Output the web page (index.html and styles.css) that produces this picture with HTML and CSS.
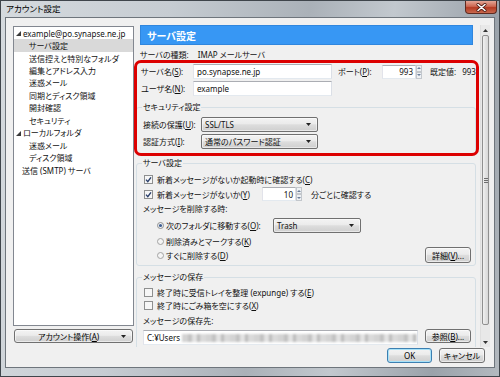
FILE: index.html
```html
<!DOCTYPE html>
<html lang="ja">
<head>
<meta charset="utf-8">
<title>アカウント設定</title>
<link rel="stylesheet" href="styles.css">
</head>
<body>
<div class="window">
  <div class="titlebar">
    <span class="title">アカウント設定</span>
    <span class="close"><svg width="11" height="9" viewBox="0 0 11 9"><path d="M2 1.5L9 7.5M9 1.5L2 7.5" stroke="#4a1b12" stroke-width="3" stroke-linecap="round"/><path d="M2 1.5L9 7.5M9 1.5L2 7.5" stroke="#fff" stroke-width="1.6" stroke-linecap="round"/></svg></span>
  </div>
  <div class="client">
    <div class="main">
      <div class="leftcol">
        <ul class="tree">
          <li class="root"><svg class="twisty" width="5" height="5" viewBox="0 0 5 5"><path d="M5 0V5H0Z" fill="#3a3a3a"/></svg>example@po.synapse.ne.jp</li>
          <li class="sub selected">サーバ設定</li>
          <li class="sub">送信控えと特別なフォルダ</li>
          <li class="sub">編集とアドレス入力</li>
          <li class="sub">迷惑メール</li>
          <li class="sub">同期とディスク領域</li>
          <li class="sub">開封確認</li>
          <li class="sub">セキュリティ</li>
          <li class="root"><svg class="twisty" width="5" height="5" viewBox="0 0 5 5"><path d="M5 0V5H0Z" fill="#3a3a3a"/></svg>ローカルフォルダ</li>
          <li class="sub">迷惑メール</li>
          <li class="sub">ディスク領域</li>
          <li class="leaf">送信 (SMTP) サーバ</li>
        </ul>
        <div class="btn acct-btn"><span>アカウント操作(<u>A</u>)</span><svg width="5" height="3" viewBox="0 0 5 3"><path d="M0 0H5L2.5 3Z" fill="#222"/></svg></div>
      </div>
      <div class="rightcol">
        <div class="pane">
          <div class="content">
            <div class="banner">サーバ設定</div>
            <div class="type">サーバの種類:<span class="gap">IMAP メールサーバ</span></div>
            <div class="srow first">
              <span class="lbl-srv">サーバ名(<u>S</u>):</span>
              <span class="tb tb-wide">po.synapse.ne.jp</span>
              <span class="port-lbl">ポート(<u>P</u>):</span>
              <span class="spin spin-port"><span class="tb tb-num">993</span><span class="spin-btns"><span class="sbtn"><svg width="4" height="2" viewBox="0 0 4 2"><path d="M0 2H4L2 0Z" fill="#6b7f99"/></svg></span><span class="sbtn"><svg width="4" height="2" viewBox="0 0 4 2"><path d="M0 0H4L2 2Z" fill="#6b7f99"/></svg></span></span></span>
              <span class="defval">既定値:<span class="gap2">993</span></span>
            </div>
            <div class="srow">
              <span class="lbl-srv">ユーザ名(<u>N</u>):</span>
              <span class="tb tb-wide">example</span>
            </div>
            <fieldset class="group sec">
              <legend>セキュリティ設定</legend>
              <div class="grow">
                <span class="lbl-sec">接続の保護(<u>U</u>):</span>
                <span class="combo combo-sec"><span>SSL/TLS</span><svg width="5" height="3" viewBox="0 0 5 3"><path d="M0 0H5L2.5 3Z" fill="#222"/></svg></span>
              </div>
              <div class="grow second">
                <span class="lbl-sec">認証方式(<u>I</u>):</span>
                <span class="combo combo-sec"><span>通常のパスワード認証</span><svg width="5" height="3" viewBox="0 0 5 3"><path d="M0 0H5L2.5 3Z" fill="#222"/></svg></span>
              </div>
            </fieldset>
            <fieldset class="group srv">
              <legend>サーバ設定</legend>
              <div class="cbrow">
                <svg class="cb" width="9" height="9" viewBox="0 0 9 9"><rect x="0.5" y="0.5" width="8" height="8" fill="#f6f6f6" stroke="#8e8f8f"/><path d="M2 4.6L3.8 6.6L7 2.3" fill="none" stroke="#2a3f6b" stroke-width="1.4"/></svg>
                <span>新着メッセージがないか起動時に確認する(<u>C</u>)</span>
              </div>
              <div class="cbrow cb2">
                <svg class="cb" width="9" height="9" viewBox="0 0 9 9"><rect x="0.5" y="0.5" width="8" height="8" fill="#f6f6f6" stroke="#8e8f8f"/><path d="M2 4.6L3.8 6.6L7 2.3" fill="none" stroke="#2a3f6b" stroke-width="1.4"/></svg>
                <span class="cb2-lbl">新着メッセージがないか(<u>Y</u>)</span>
                <span class="spin spin-min"><span class="tb tb-num">10</span><span class="spin-btns"><span class="sbtn"><svg width="4" height="2" viewBox="0 0 4 2"><path d="M0 2H4L2 0Z" fill="#6b7f99"/></svg></span><span class="sbtn"><svg width="4" height="2" viewBox="0 0 4 2"><path d="M0 0H4L2 2Z" fill="#6b7f99"/></svg></span></span></span>
                <span class="minutes">分ごとに確認する</span>
              </div>
              <div class="plain del">メッセージを削除する時:</div>
              <div class="rrow r1">
                <svg class="radio" width="7" height="7" viewBox="0 0 7 7"><circle cx="3.5" cy="3.5" r="3" fill="#f4f4f4" stroke="#8e8f8f"/><circle cx="3.5" cy="3.5" r="1.6" fill="#3d5e92"/></svg>
                <span class="r1-lbl">次のフォルダに移動する(<u>O</u>):</span>
                <span class="combo combo-trash"><span>Trash</span><svg width="5" height="3" viewBox="0 0 5 3"><path d="M0 0H5L2.5 3Z" fill="#222"/></svg></span>
              </div>
              <div class="rrow r2">
                <svg class="radio" width="7" height="7" viewBox="0 0 7 7"><circle cx="3.5" cy="3.5" r="3" fill="#f4f4f4" stroke="#a3a3a3"/></svg>
                <span>削除済みとマークする(<u>K</u>)</span>
              </div>
              <div class="rrow r3">
                <span class="rgroup">
                  <svg class="radio" width="7" height="7" viewBox="0 0 7 7"><circle cx="3.5" cy="3.5" r="3" fill="#f4f4f4" stroke="#a3a3a3"/></svg>
                  <span>すぐに削除する(<u>D</u>)</span>
                </span>
                <span class="btn small-btn">詳細(<u>V</u>)...</span>
              </div>
            </fieldset>
            <fieldset class="group store">
              <legend>メッセージの保存</legend>
              <div class="cbrow">
                <svg class="cb" width="9" height="9" viewBox="0 0 9 9"><rect x="0.5" y="0.5" width="8" height="8" fill="#f6f6f6" stroke="#8e8f8f"/></svg>
                <span>終了時に受信トレイを整理 (expunge) する(<u>E</u>)</span>
              </div>
              <div class="cbrow cb-next">
                <svg class="cb" width="9" height="9" viewBox="0 0 9 9"><rect x="0.5" y="0.5" width="8" height="8" fill="#f6f6f6" stroke="#8e8f8f"/></svg>
                <span>終了時にごみ箱を空にする(<u>X</u>)</span>
              </div>
              <div class="plain dest">メッセージの保存先:</div>
              <div class="pathrow">
                <span class="tb tb-path">C:¥Users<span class="blur"></span></span>
                <span class="btn small-btn">参照(<u>B</u>)...</span>
              </div>
            </fieldset>
          </div>
          <div class="scrollbar">
            <span class="sb-arrow"><svg width="5" height="3" viewBox="0 0 5 3"><path d="M0 3H5L2.5 0Z" fill="#333"/></svg></span>
            <span class="sb-track"><span class="sb-thumb"><span class="grip"></span></span></span>
            <span class="sb-arrow"><svg width="5" height="3" viewBox="0 0 5 3"><path d="M0 0H5L2.5 3Z" fill="#333"/></svg></span>
          </div>
        </div>
        <div class="dlg">
          <span class="btn dlg-btn ok">OK</span>
          <span class="btn dlg-btn cancel">キャンセル</span>
        </div>
      </div>
    </div>
    <div class="highlight"></div>
  </div>
</div>
</body>
</html>
```
FILE: styles.css
```css
* { box-sizing: border-box; }
html, body { margin: 0; padding: 0; }
body {
  width: 500px; height: 377px; overflow: hidden;
  font-family: "Noto Sans", "Noto Sans CJK JP", sans-serif;
  font-size: 8px; color: #111;
  font-feature-settings: "palt";
  background: #fff;
}
u { text-decoration: underline; text-underline-offset: 1px; }

.window {
  width: 500px; height: 377px;
  border: 1px solid #3f454b;
  background: linear-gradient(100deg, #d5dade 0%, #c6ccd2 30%, #aab1b8 55%, #c2c8ce 70%, #9aa2aa 88%, #b3b9bf 100%);
  display: flex; flex-direction: column;
}
.titlebar {
  height: 16px; flex: none;
  display: flex; justify-content: space-between; align-items: flex-start;
  padding-left: 5px;
}
.title { line-height: 16px; color: #000; font-size: 8.5px; }
.close {
  width: 32px; height: 13px; margin-right: 2px;
  background: linear-gradient(#e4a696, #cc6650 45%, #b43a22 55%, #c8694e);
  border: 1px solid #5e2a20; border-top: none;
  border-radius: 0 0 4px 4px;
  display: flex; align-items: center; justify-content: center;
}

.client {
  flex: 1;
  margin: 0 4px 8px;
  border: 1px solid #6e757c;
  background: #f0f0f0;
  padding: 7px 4px 4px 7px;
  position: relative;
}
.main {
  display: grid;
  grid-template-columns: 121px 1fr;
  column-gap: 1px;
  height: 338px;
}

/* left column */
.leftcol { display: flex; flex-direction: column; padding-top: 1px; }
.tree {
  height: 300px; margin: 0; padding: 0; list-style: none;
  background: #fff; border: 1px solid #828790;
}
.tree li {
  height: 12.45px; display: flex; align-items: center; white-space: nowrap;
}
.tree .root { padding-left: 2px; }
.tree .twisty { margin-right: 2px; margin-top: 1px; }
.tree .sub { padding-left: 15px; }
.tree .leaf { padding-left: 8px; }
.tree .selected { background: #d9d9d9; }

.btn {
  height: 14px;
  border: 1px solid #707070; border-radius: 3px;
  background: linear-gradient(#f3f3f3 0%, #ebebeb 45%, #dddddd 52%, #cfcfcf 100%);
  box-shadow: inset 0 0 0 1px rgba(255,255,255,0.55);
  display: flex; align-items: center; justify-content: center;
  color: #000; white-space: nowrap;
}
.acct-btn {
  margin-top: 3px; margin-left: 1px; width: 119px;
  justify-content: space-between;
  padding: 0 6px 0 23px;
}

/* right column */
.rightcol { display: flex; flex-direction: column; }
.pane { height: 322px; display: flex; overflow: hidden; }
.content {
  flex: 1; min-width: 0; overflow: hidden;
  padding: 0 4px 0 1px;
}
.banner {
  height: 20px; margin: 0 3px 0 4px;
  background: #3797f4;
  border: 1px solid #2f86de;
  color: #fff; font-weight: bold; font-size: 10px;
  display: flex; align-items: center; padding-left: 6px;
}
.type {
  height: 10px; line-height: 10px; margin-top: 5px; padding-left: 4px;
  white-space: nowrap;
}
.gap { margin-left: 9px; }
.gap2 { margin-left: 6px; }

.srow {
  display: flex; align-items: center; height: 15px;
  padding-left: 5px; margin-top: 2px; white-space: nowrap;
}
.srow.first { margin-top: 4px; }
.lbl-srv { width: 52px; }
.tb {
  height: 15px;
  border: 1px solid #abadb3;
  border-color: #abadb3 #dbdfe6 #e3e9ef #e2e3ea;
  background: #fff;
  padding-left: 3px;
  display: flex; align-items: center;
  white-space: nowrap; overflow: hidden;
}
.tb-wide { width: 139px; }
.port-lbl { margin-left: 6px; width: 44px; }
.spin { display: flex; height: 14px; }
.spin .tb { height: 14px; }
.spin-port { width: 40px; }
.spin-min { width: 40px; }
.tb-num { flex: 1; justify-content: flex-end; padding-right: 2px; }
.spin-btns { width: 6px; display: flex; flex-direction: column; }
.sbtn {
  flex: 1; border: 1px solid #c3c7cc; background: #eef1f4;
  display: flex; align-items: center; justify-content: center;
}
.defval { margin-left: 8px; }

/* groupboxes */
.group {
  margin: 0;
  border: 1px solid #d5dfe5; border-radius: 3px;
  padding: 5px 4px 6px 5px;
}
.group legend {
  padding: 0 1px; height: 10px; line-height: 10px;
}
.sec { margin-top: 6px; }
.grow { display: flex; align-items: center; height: 15px; white-space: nowrap; }
.grow.second { margin-top: 2px; }
.lbl-sec { width: 59px; padding-left: 1px; }
.combo {
  height: 15px;
  border: 1px solid #707070; border-radius: 2px;
  background: linear-gradient(#f3f3f3 0%, #ebebeb 45%, #dddddd 52%, #cfcfcf 100%);
  box-shadow: inset 0 0 0 1px rgba(255,255,255,0.5);
  display: flex; align-items: center; justify-content: space-between;
  padding: 0 6px 0 3px; white-space: nowrap;
}
.combo-sec { width: 117px; }
.combo-trash { width: 88px; }

.srv { margin-top: 2px; padding-bottom: 2px; }
.cbrow {
  display: flex; align-items: center; height: 12px;
  padding-left: 2px; gap: 4px; white-space: nowrap;
}
.cbrow.cb2 { height: 14px; margin-top: 2px; }
.cb2-lbl { width: 101px; }
.minutes { margin-left: 5px; }
.plain { height: 10px; line-height: 10px; padding-left: 1px; white-space: nowrap; }
.plain.del { margin-top: 3px; }
.rrow {
  display: flex; align-items: center; gap: 2px;
  padding-left: 15px; white-space: nowrap;
}
.rrow.r1 { height: 15px; margin-top: 4px; }
.rrow.r2 { height: 12px; margin-top: 2px; }
.rrow.r3 { height: 16px; justify-content: space-between; }
.rgroup { display: flex; align-items: center; gap: 2px; }
.r1-lbl { width: 105px; }
.small-btn { width: 46px; height: 15px; }
.rrow.r3 .small-btn { height: 16px; }

.store { margin-top: 6px; padding-top: 4px; }
.cbrow.cb-next { margin-top: 1px; }
.plain.dest { margin-top: 5px; }
.pathrow {
  display: flex; justify-content: space-between; align-items: flex-start;
  margin-top: 3px; height: 16px;
}
.tb-path { width: 275px; margin-left: 1px; margin-top: 1px; }
.blur {
  display: inline-block; width: 238px; height: 8px; margin-left: 2px;
  background: repeating-linear-gradient(90deg, #d3d3d3 0 6px, #c2c2c2 6px 10px, #e3e3e3 10px 15px, #bcbcbc 15px 18px, #dadada 18px 24px);
  filter: blur(0.8px);
}
.pathrow .small-btn { height: 14px; }

/* scrollbar */
.scrollbar {
  width: 10px; display: flex; flex-direction: column;
  background: #e8e8e8;
  border-left: 1px solid #dedede;
}
.sb-arrow {
  height: 10px; flex: none;
  display: flex; align-items: center; justify-content: center;
}
.sb-track { flex: 1; padding: 0 1px; }
.sb-thumb {
  display: flex; align-items: center; justify-content: center;
  height: 290px;
  border: 1px solid #8f8f8f; border-radius: 2px;
  background: linear-gradient(90deg, #f1f1f1, #e2e2e2 50%, #d8d8d8);
}
.grip {
  width: 4px; height: 5px;
  background: repeating-linear-gradient(#6d6d6d 0 1px, transparent 1px 2px);
}

/* dialog buttons */
.dlg {
  display: flex; justify-content: flex-end; gap: 7px;
  margin-top: 1px; padding-right: 5px;
}
.dlg-btn { height: 15px; }
.dlg-btn.ok {
  width: 45px;
  border-color: #3c7fb1;
  box-shadow: inset 0 0 0 1px #a8e2f8;
}
.dlg-btn.cancel { width: 46px; }

/* annotation overlay */
.highlight {
  position: absolute;
  left: 128px; top: 42px;
  width: 345px; height: 96px;
  border: 3px solid #dc0000;
  border-radius: 7px;
  pointer-events: none;
}
```
